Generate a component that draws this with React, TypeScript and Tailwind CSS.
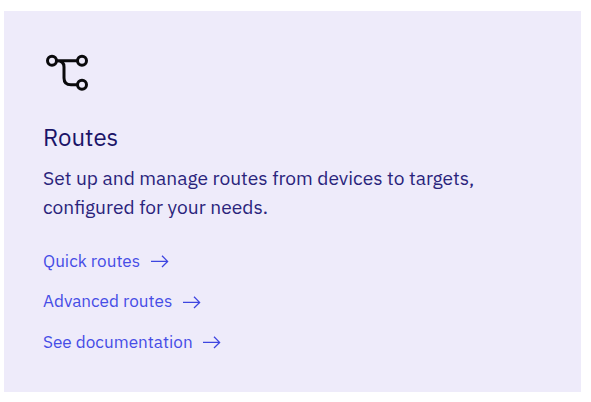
const links = ["Quick routes", "Advanced routes", "See documentation"];

function RoutesIcon() {
  return (
    <svg width="48" height="48" viewBox="0 0 48 48" fill="none" stroke="#0a0a0c" strokeWidth="3">
      <circle cx="9" cy="12.8" r="4.5" />
      <circle cx="39" cy="12.8" r="4.5" />
      <circle cx="39" cy="36.8" r="4.5" />
      <path d="M13.5 12.8H34.5M14 12.8Q21 12.8 21 19V30Q21 36.8 28 36.8H34.5" />
    </svg>
  );
}

function Arrow() {
  return (
    <svg className="mt-px" width="18" height="14" viewBox="0 0 18 14" fill="none" stroke="#3d45e0" strokeWidth="1.3">
      <path d="M0 7.4H16.6M11 1.8L16.6 7.4L11 13" />
    </svg>
  );
}

export default function App() {
  return (
    <main className="h-[402px] bg-white pt-[11px] pl-1 font-['IBM_Plex_Sans','Noto_Sans',sans-serif]">
      <section className="h-[381px] w-[577px] bg-[#eeebfa] pt-[37px] pl-[39px] text-[#1a1468]">
        <RoutesIcon />
        <h2 className="mt-[25px] text-2xl leading-8">Routes</h2>
        <p className="mt-[10px] text-[19.2px] leading-[29px] text-[#2a247c]">
          Set up and manage routes from devices to targets,<br />configured for your needs.
        </p>
        <nav className="mt-[19.4px] flex flex-col text-[#464de6]">
          {links.map((label) => (
            <a key={label} className="flex h-[40.5px] items-center gap-[10.5px] text-[17.15px]">
              <span className="whitespace-nowrap">{label}</span>
              <Arrow />
            </a>
          ))}
        </nav>
      </section>
    </main>
  );
}
